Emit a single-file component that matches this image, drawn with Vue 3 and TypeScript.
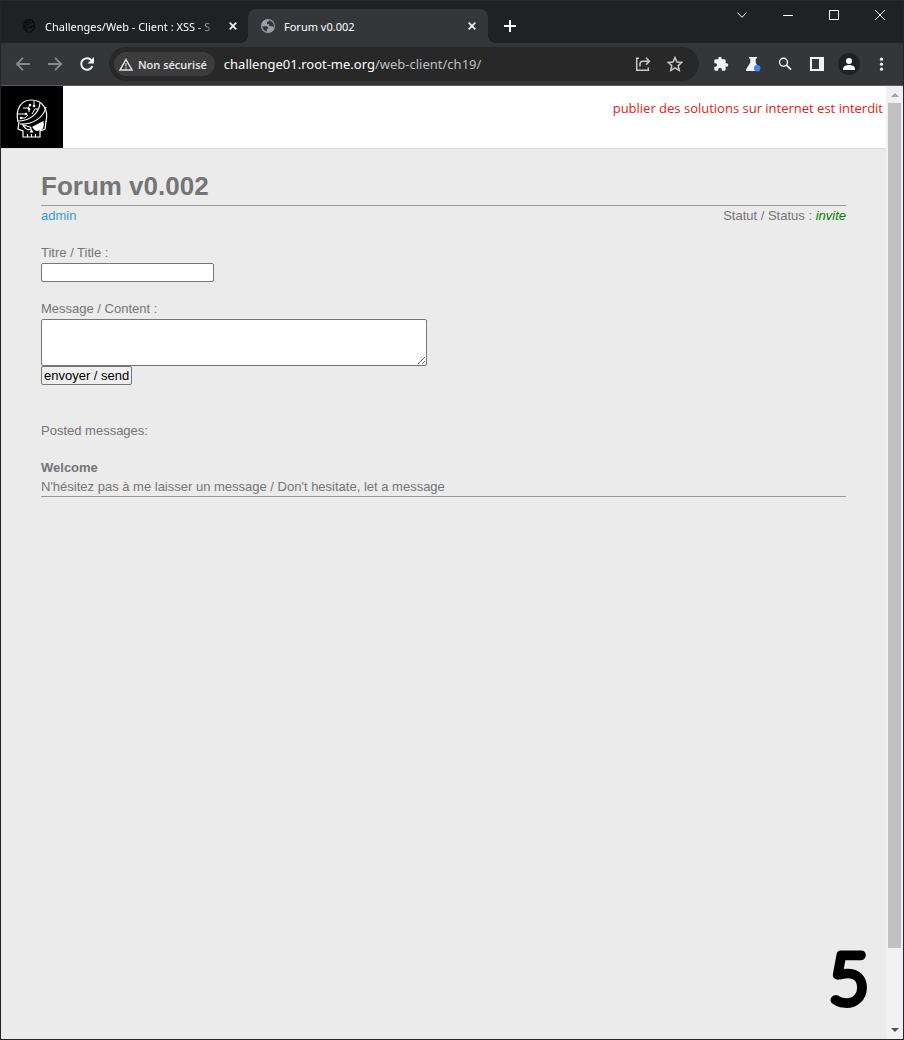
<script setup lang="ts">
import { ref } from 'vue'

interface Message {
  title: string
  content: string
}

const title = ref('')
const content = ref('')
const messages = ref<Message[]>([
  {
    title: 'Welcome',
    content: "N'hésitez pas à me laisser un message / Don't hesitate, let a message",
  },
])

function send(): void {
  if (!title.value && !content.value) return
  messages.value.push({ title: title.value, content: content.value })
  title.value = ''
  content.value = ''
}
</script>

<template>
  <div class="window">
    <header class="tabstrip">
      <div class="tab">
        <svg class="favicon" viewBox="0 0 16 16" fill="none" stroke="#08090a" stroke-width="1.2">
          <path d="M3 6a5 4.5 0 0 1 10 0v5l-2 1v2H5v-2l-2-1zM3 8l9-4M4 9l3 1 5-2" />
          <path d="M6 3l-1 3M9 2L7 5" />
        </svg>
        <span class="tab-title faded">Challenges/Web - Client : XSS - S</span>
        <button class="tab-close" aria-label="Close tab">
          <svg viewBox="0 0 8 8"><path d="M.7.7l6.6 6.6M7.3.7L.7 7.3" /></svg>
        </button>
      </div>
      <div class="tab active">
        <svg class="favicon" viewBox="0 0 16 16">
          <circle cx="8" cy="8" r="7" fill="#9aa0a6" />
          <path d="M9.500 2.300L7 4.300v2h2.200v1.900h3.600l1.200 1.500c.5-2.600-.6-5.800-4.500-7.400zM2.400 8.200h4.400l1.400 1.400v1.200H7v2.800C4.300 13.200 2.400 11 2.400 8.200z" fill="#35363a" />
        </svg>
        <span class="tab-title">Forum v0.002</span>
        <button class="tab-close" aria-label="Close tab">
          <svg viewBox="0 0 8 8"><path d="M.7.7l6.6 6.6M7.3.7L.7 7.3" /></svg>
        </button>
      </div>
      <button class="new-tab" aria-label="New tab">
        <svg width="12" height="12" viewBox="0 0 12 12"><path d="M6 0v12M0 6h12" stroke="#fff" stroke-width="2" /></svg>
      </button>
      <div class="controls">
        <button aria-label="Search tabs">
          <svg width="10" height="6" viewBox="0 0 10 6"><path d="M.4.5L5 5.3 9.6.5" /></svg>
        </button>
        <button aria-label="Minimize">
          <svg width="10" height="10" viewBox="0 0 10 10"><path d="M0 5.5h10" /></svg>
        </button>
        <button aria-label="Maximize">
          <svg width="10" height="10" viewBox="0 0 10 10"><path d="M.5.5h9v9h-9z" /></svg>
        </button>
        <button aria-label="Close">
          <svg width="10" height="10" viewBox="0 0 10 10"><path d="M0 0l10 10M10 0L0 10" /></svg>
        </button>
      </div>
    </header>

    <nav class="toolbar">
      <button class="tool dim" aria-label="Back">
        <svg viewBox="0 0 16 16"><path d="M15 8H2M8 1.8L1.8 8 8 14.2" fill="none" stroke="currentColor" stroke-width="1.8" /></svg>
      </button>
      <button class="tool dim" aria-label="Forward">
        <svg viewBox="0 0 16 16"><path d="M1 8h13M8 1.8L14.2 8 8 14.2" fill="none" stroke="currentColor" stroke-width="1.8" /></svg>
      </button>
      <button class="tool" aria-label="Reload">
        <svg viewBox="0 0 16 16">
          <path d="M13.4 10.2A5.8 5.8 0 1 1 12.4 4.1L14 5.7" fill="none" stroke="currentColor" stroke-width="2" />
          <path d="M15 1v6.5H8.5z" fill="currentColor" />
        </svg>
      </button>
      <div class="omnibox">
        <button class="chip">
          <svg width="14" height="13" viewBox="0 0 14 13">
            <path d="M7 1.5L13 12H1z" fill="none" stroke="#dfe1e5" stroke-width="1.5" />
            <path d="M7 5v3.5M7 9.3v1.5" stroke="#b9bbbe" stroke-width="1.4" />
          </svg>
          <span>Non sécurisé</span>
        </button>
        <a class="url" href="#">challenge01.root-me.org<span>/web-client/ch19/</span></a>
        <button class="tool soft" aria-label="Share">
          <svg viewBox="0 0 16 16" fill="none" stroke="currentColor" stroke-width="1.5">
            <path d="M4 2.3H1.7v11.9h11.6V11.5M5 10.5V8.2a3 3 0 0 1 3-3h6M11 1.8l3.4 3.4L11 8.6" />
          </svg>
        </button>
        <button class="tool soft" aria-label="Bookmark">
          <svg viewBox="0 0 16 16" fill="none" stroke="currentColor" stroke-width="1.5">
            <path d="M8 1.5l2 4.5 4.8.4-3.6 3.2 1.1 4.8L8 11.9l-4.3 2.5 1.1-4.8L1.2 6.4 6 6z" />
          </svg>
        </button>
      </div>
      <button class="tool" aria-label="Extensions">
        <svg viewBox="0 0 24 24" fill="currentColor">
          <path d="M20.5 11H19V7c0-1.1-.9-2-2-2h-4V3.500a2.500 2.500 0 0 0-5 0V5H4c-1.100 0-2 .9-2 2v3.800h1.500a2.700 2.700 0 0 1 0 5.400H2V20c0 1.100.9 2 2 2h3.800v-1.500a2.700 2.700 0 0 1 5.400 0V22H17c1.100 0 2-.9 2-2v-4h1.500a2.500 2.500 0 0 0 0-5z" />
        </svg>
      </button>
      <button class="tool" aria-label="Labs">
        <svg viewBox="0 0 16 16">
          <path d="M4 1h8v1.500h-1.300v4L14 13.500q.4 1.500-1 1.500H2q-1.600 0-1-1.500L5.300 6.500v-4H4z" fill="currentColor" />
          <circle cx="12.200" cy="12.200" r="3.200" fill="#4285f4" />
        </svg>
      </button>
      <button class="tool" aria-label="Search">
        <svg viewBox="0 0 16 16" fill="none" stroke="currentColor">
          <circle cx="6.500" cy="6.200" r="4" stroke-width="1.400" />
          <path d="M9.500 9.200l4.500 4.500" stroke-width="1.700" />
        </svg>
      </button>
      <button class="tool" aria-label="Side panel">
        <svg viewBox="0 0 16 16"><path d="M1 1h14v14H1zM3 3v10h7V3z" fill="currentColor" fill-rule="evenodd" /></svg>
      </button>
      <button class="tool" aria-label="Profile">
        <svg class="avatar" viewBox="0 0 22 22">
          <circle cx="11" cy="11" r="11" fill="#202124" />
          <circle cx="11" cy="8" r="3" fill="#fff" />
          <path d="M5 17v-1.500c0-2.500 4-3.500 6-3.500s6 1 6 3.500V17z" fill="#fff" />
        </svg>
      </button>
      <button class="tool" aria-label="Menu">
        <svg viewBox="0 0 16 16" fill="currentColor">
          <circle cx="8.500" cy="3.200" r="1.600" /><circle cx="8.500" cy="8.200" r="1.600" /><circle cx="8.500" cy="13.200" r="1.600" />
        </svg>
      </button>
    </nav>

    <div class="viewport">
      <div class="page">
        <div class="banner">
          <a class="logo" href="#" aria-label="Root Me">
            <svg width="34" height="42" viewBox="0 0 34 42" fill="none" stroke="#fff" stroke-width="1.200">
              <path d="M3 26C0 13 6 4 16.500 4S34 13 31 26" />
              <path d="M3 25C14 25 24 18 25 7M5 28C18 29 29 21 31 11" />
              <path d="M4 26l-1 7 5 2v6h17v-6l5-2 1-8" />
              <path d="M3 18h7M5 22h5l3-3M8 12h5l2-3M14 16v-3M17 18l3-5h3M19 5v4" stroke-width="1" />
              <path d="M12.500 41v-3M16.500 41v-3M20.500 41v-3" />
              <path d="M18 31l10-5c1 5-1 8-4 8-3 1-5-1-6-3z" fill="#fff" />
              <path d="M8 29l7 2 1 1c-1 3-6 2-8-3z" />
              <path d="M16.500 34l-1 2h2z" fill="#fff" />
              <g fill="#fff" stroke="none">
                <circle cx="11" cy="18" r="1.300" />
                <circle cx="14" cy="13" r="1.300" />
                <circle cx="6" cy="22" r="1.300" />
                <circle cx="15" cy="9" r="1.300" />
                <circle cx="19" cy="10" r="1.300" />
              </g>
            </svg>
          </a>
          <p class="notice">publier des solutions sur internet est interdit</p>
        </div>
        <main>
          <h1>Forum v0.002</h1>
          <div class="status">
            <a href="#">admin</a>
            <span>Statut / Status : <i>invite</i></span>
          </div>
          <form @submit.prevent="send">
            <label for="title">Titre / Title :</label>
            <input id="title" v-model="title" type="text" />
            <label for="content">Message / Content :</label>
            <textarea id="content" v-model="content"></textarea>
            <button class="send" type="submit">envoyer / send</button>
          </form>
          <p class="posted">Posted messages:</p>
          <article v-for="(message, index) in messages" :key="index">
            <b>{{ message.title }}</b>
            <p>{{ message.content }}</p>
          </article>
        </main>
        <svg class="step" width="50" height="90" viewBox="0 0 50 90">
          <text x="25" y="70" text-anchor="middle">5</text>
        </svg>
      </div>
      <div class="scrollbar">
        <svg width="8" height="4" viewBox="0 0 8 4"><path d="M0 4l4-4 4 4z" fill="#a3a3a3" /></svg>
        <div class="track"><div class="thumb"></div></div>
        <svg width="8" height="4" viewBox="0 0 8 4"><path d="M0 0l4 4 4-4z" fill="#505050" /></svg>
      </div>
    </div>
  </div>
</template>

<style>
body {
  margin: 0;
}
</style>

<style scoped>
* {
  box-sizing: border-box;
}
.window {
  display: flex;
  flex-direction: column;
  height: 100vh;
  border: 1px solid #242526;
  border-top: 0;
  background: #202124;
  font-family: "Open Sans", "Noto Sans", sans-serif;
}
button {
  padding: 0;
  border: 0;
  background: none;
  color: inherit;
  font: inherit;
}
svg {
  display: block;
  flex: none;
}
.tabstrip {
  display: flex;
  align-items: flex-end;
  height: 43px;
  padding-left: 8px;
  border-top: 1px solid #292b2a;
  color: #fff;
}
.tab {
  position: relative;
  display: flex;
  align-items: center;
  width: 240px;
  height: 34px;
  padding: 0 8px 0 12px;
  border-radius: 8px 8px 0 0;
  font-family: "Noto Sans", sans-serif;
  font-size: 11px;
}
.tab.active {
  margin-left: -1px;
  background: #35363a;
}
.tab.active::before,
.tab.active::after {
  content: "";
  position: absolute;
  bottom: 0;
  width: 8px;
  height: 8px;
}
.tab.active::before {
  right: 100%;
  background: radial-gradient(circle at 0 0, transparent 8px, #35363a 8px);
}
.tab.active::after {
  left: 100%;
  background: radial-gradient(circle at 100% 0, transparent 8px, #35363a 8px);
}
.favicon {
  width: 16px;
  height: 16px;
  margin-right: 8px;
}
.tab-title {
  flex: 1;
  white-space: nowrap;
}
.faded {
  mask-image: linear-gradient(to right, #000 86%, rgb(0 0 0 / 20%) 96%);
}
.tab-close {
  display: grid;
  place-items: center;
  width: 16px;
  height: 16px;
  margin-left: 4px;
}
.tab-close svg {
  width: 8px;
  height: 8px;
  fill: none;
  stroke: #f1f3f4;
  stroke-width: 1.7;
}
.new-tab {
  display: grid;
  place-items: center;
  width: 28px;
  height: 34px;
  margin-left: 8px;
}
.controls {
  display: flex;
  align-self: flex-start;
  margin-left: auto;
}
.controls button {
  display: grid;
  place-items: center;
  width: 46px;
  height: 28px;
}
.controls svg {
  fill: none;
  stroke: #fff;
  stroke-width: 1;
}
.toolbar {
  display: flex;
  align-items: center;
  height: 43px;
  padding: 0 6px;
  border-bottom: 1px solid #5b5c60;
  background: #35363a;
  color: #f1f3f4;
}
.tool {
  display: grid;
  place-items: center;
  flex: none;
  width: 32px;
  height: 32px;
}
.tool svg {
  width: 16px;
  height: 16px;
}
.tool .avatar {
  width: 22px;
  height: 22px;
}
.dim {
  color: #87888a;
}
.soft {
  color: #c6c8ca;
}
.omnibox {
  display: flex;
  flex: 1;
  align-items: center;
  height: 34px;
  margin: 0 6px;
  padding: 0 8px 0 5px;
  border-radius: 17px;
  background: #282828;
}
.chip {
  display: flex;
  align-items: center;
  gap: 5px;
  height: 24px;
  padding: 0 8px 0 5px;
  border-radius: 12px;
  background: #3c3c3c;
  color: #e8eaed;
  font-size: 11px;
  font-weight: 600;
  white-space: nowrap;
}
.url {
  flex: 1;
  margin-left: 9px;
  color: #fff;
  font-family: "Noto Sans", sans-serif;
  font-size: 13px;
  text-decoration: none;
  white-space: nowrap;
}
.url span {
  color: #bdc1c6;
}
.viewport {
  display: flex;
  flex: 1;
  min-height: 0;
}
.page {
  position: relative;
  flex: 1;
  background: #ebebeb;
  color: #757575;
  font: 13px/19px "Liberation Sans", Arial, sans-serif;
}
.banner {
  display: flex;
  justify-content: space-between;
  border-bottom: 1px solid #dcdcdc;
  background: #fff;
}
.logo {
  display: grid;
  place-items: center;
  width: 62px;
  height: 62px;
  background: #000;
}
.notice {
  margin: 13px 3px 0 0;
  color: #dd2211;
  font-family: "Open Sans", sans-serif;
}
main {
  padding: 22px 40px 0;
}
h1 {
  margin: 0;
  padding-bottom: 4px;
  border-bottom: 1px solid #999;
  font-size: 26px;
  line-height: 30px;
}
.status {
  display: flex;
  justify-content: space-between;
}
.status a {
  color: #33a0cc;
  text-decoration: none;
}
.status i {
  color: #008000;
}
form {
  display: flex;
  flex-direction: column;
  align-items: flex-start;
  margin-top: 18px;
}
label {
  margin-bottom: 1px;
}
input,
textarea {
  margin: 0;
  border: 1px solid #767676;
  border-radius: 2px;
  background: #fff;
  font: inherit;
}
input {
  width: 173px;
  height: 19px;
  margin-bottom: 17px;
}
textarea {
  width: 386px;
  height: 47px;
}
.send {
  height: 19px;
  padding: 0 2px;
  border: 1px solid #767676;
  border-radius: 2px;
  background: #efefef;
  color: #000;
  line-height: 17px;
}
p {
  margin: 0;
}
.posted {
  margin: 36px 0 18px;
}
article {
  border-bottom: 1px solid #999;
}
.step {
  position: absolute;
  right: 12px;
  bottom: 16px;
}
.step text {
  fill: #000;
  stroke: #000;
  stroke-width: 9px;
  stroke-linejoin: round;
  font: 100 68px Lato, sans-serif;
}
.scrollbar {
  display: flex;
  flex-direction: column;
  align-items: center;
  width: 17px;
  padding: 7px 0;
  background: #f1f1f1;
}
.track {
  flex: 1;
  align-self: stretch;
  margin: 6px 2px;
}
.thumb {
  height: 92%;
  background: #c1c1c1;
}
</style>
